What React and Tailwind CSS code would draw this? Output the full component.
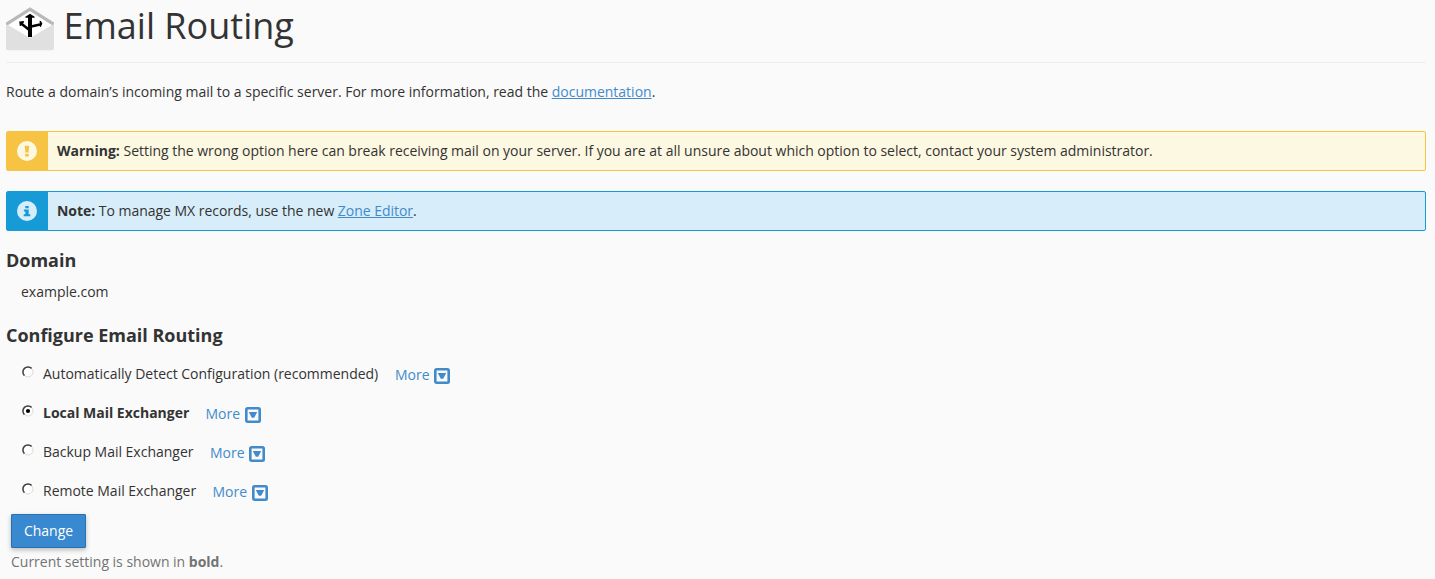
const OPTIONS = [
  { label: "Automatically Detect Configuration (recommended)", width: "w-[352px]" },
  { label: "Local Mail Exchanger", width: "w-[162.5px]", selected: true },
  { label: "Backup Mail Exchanger", width: "w-[167px]" },
  { label: "Remote Mail Exchanger", width: "w-[169.5px]" },
];

function RoutingIcon() {
  return (
    <svg className="mt-[7px] h-[44px] w-12 shrink-0" viewBox="0 0 48 44">
      <path d="M0 17.5 24 2l24 15.5V41a2.3 2.3 0 0 1-2.3 2.3H2.3A2.3 2.3 0 0 1 0 41Z" fill="#e0e0e0" />
      <path d="M2 18 24 4l22 14-22 13Z" fill="#fff" />
      <path d="M0 17.5V15.5L24 0.3l24 15.2v2L46 18 24 4 2 18Z" fill="#b9b9b9" />
      <g fill="none" stroke="#000">
        <path d="M24 30V9" strokeWidth="4" />
        <path d="M24 23.5 15.5 16.8M24 19.8l10-2.3" strokeWidth="2.6" />
      </g>
      <path d="M24 6.8 28.6 9.8V10.8H19.4V9.8ZM13.2 14.6l4.8-.5-.2 1.3-2.6 3.4-1.4.2ZM33.6 13.8l1.2.2 1.6 2.6-1.5 3.2-1 .1Z" fill="#000" />
    </svg>
  );
}

function Radio({ selected }) {
  return (
    <svg className="ml-px mt-[2px] h-3 w-3 shrink-0" viewBox="0 0 12 12">
      <circle cx="6" cy="6" r="5" fill="#fff" stroke="#dedbd6" />
      <path d="M2.4 9.6A5 5 0 0 1 9.6 2.4" fill="none" stroke="#404040" strokeWidth="1.5" />
      {selected && <circle cx="6" cy="6" r="2.1" fill="#000" />}
    </svg>
  );
}

function Notice({ kind, children }) {
  const warn = kind === "warning";
  return (
    <div className={`flex h-10 rounded-[2px] border ${warn ? "border-[#f6c342] bg-[#fdf8e1]" : "border-[#179bd7] bg-[#d7edf9]"}`}>
      <div className={`flex w-[41px] shrink-0 items-center pl-[10px] ${warn ? "bg-[#f6c342]" : "bg-[#179bd7]"}`}>
        <svg className="h-5 w-5" viewBox="0 0 20 20">
          <circle cx="10" cy="10" r="10" fill={warn ? "#fdf8e1" : "#d7edf9"} />
          {warn ? (
            <path d="M7.7 4.8h4.5L11.6 11.5H8.4ZM8.2 12.7h3.6v2.8H8.2Z" fill="#f6c342" />
          ) : (
            <path d="M8.3 5h3.4v2.3H8.3ZM6.9 8.5h4.8v4.8h1.6v2H6.7v-2h1.6v-2.8H6.9Z" fill="#179bd7" />
          )}
        </svg>
      </div>
      <p className={`ml-[9px] mt-[9px] ${warn ? "" : "tracking-[-0.03px]"}`}>{children}</p>
    </div>
  );
}

function More() {
  return (
    <a className="mt-px flex text-[#428bca]">
      More
      <svg className="ml-[4.6px] mt-[3px] h-4 w-4" viewBox="0 0 16 16">
        <rect x="1.3" y="1.3" width="13.4" height="13.4" rx="1.2" fill="none" stroke="#428bca" strokeWidth="2.6" />
        <path d="M3.8 5h8.4L9.2 10.8H6.8Z" fill="#428bca" />
      </svg>
    </a>
  );
}

export default function App() {
  return (
    <main className="h-[579px] overflow-hidden bg-[#fafafa] pl-[6px] pr-[9px] font-['Open_Sans',sans-serif] text-sm leading-5 tracking-[-0.012px] text-[#333]">
      <header className="flex h-[63px] border-b border-[#eee]">
        <RoutingIcon />
        <h1 className="ml-[9.5px] mt-[6px] text-[36px] leading-10 tracking-normal">Email Routing</h1>
      </header>
      <p className="mt-[19px] tracking-[-0.008px]">
        Route a domain’s incoming mail to a specific server. For more information, read the{" "}
        <a className="text-[#428bca] underline">documentation</a>.
      </p>
      <div className="mt-[29px] flex flex-col gap-5">
        <Notice kind="warning">
          <b>Warning:</b> Setting the wrong option here can break receiving mail on your server. If you are at all unsure about which option to select, contact your system administrator.
        </Notice>
        <Notice kind="info">
          <b>Note:</b> To manage MX records, use the new <a className="text-[#428bca] underline">Zone Editor</a>.
        </Notice>
      </div>
      <h2 className="mt-[19px] text-lg leading-5 font-bold">Domain</h2>
      <p className="ml-[15px] mt-3">example.com</p>
      <h2 className="mt-[23px] text-lg leading-5 font-bold">Configure Email Routing</h2>
      <div className="ml-[15px] mt-[19px] flex flex-col gap-[19px]">
        {OPTIONS.map(({ label, width, selected }) => (
          <div className="flex h-5" key={label}>
            <Radio selected={selected} />
            <span className={`ml-[9px] whitespace-nowrap ${width} ${selected ? "font-bold" : ""}`}>{label}</span>
            <More />
          </div>
        ))}
      </div>
      <button className="ml-[5px] mt-[13px] block h-[34px] w-[75px] rounded-[1px] border border-[#2a6fb0] bg-[#3889d0] text-white shadow-[0_2px_5px_rgba(0,0,0,0.26)]">
        Change
      </button>
      <p className="ml-[5px] mt-1 text-[#737373]">
        Current setting is shown in <b>bold</b>.
      </p>
    </main>
  );
}
